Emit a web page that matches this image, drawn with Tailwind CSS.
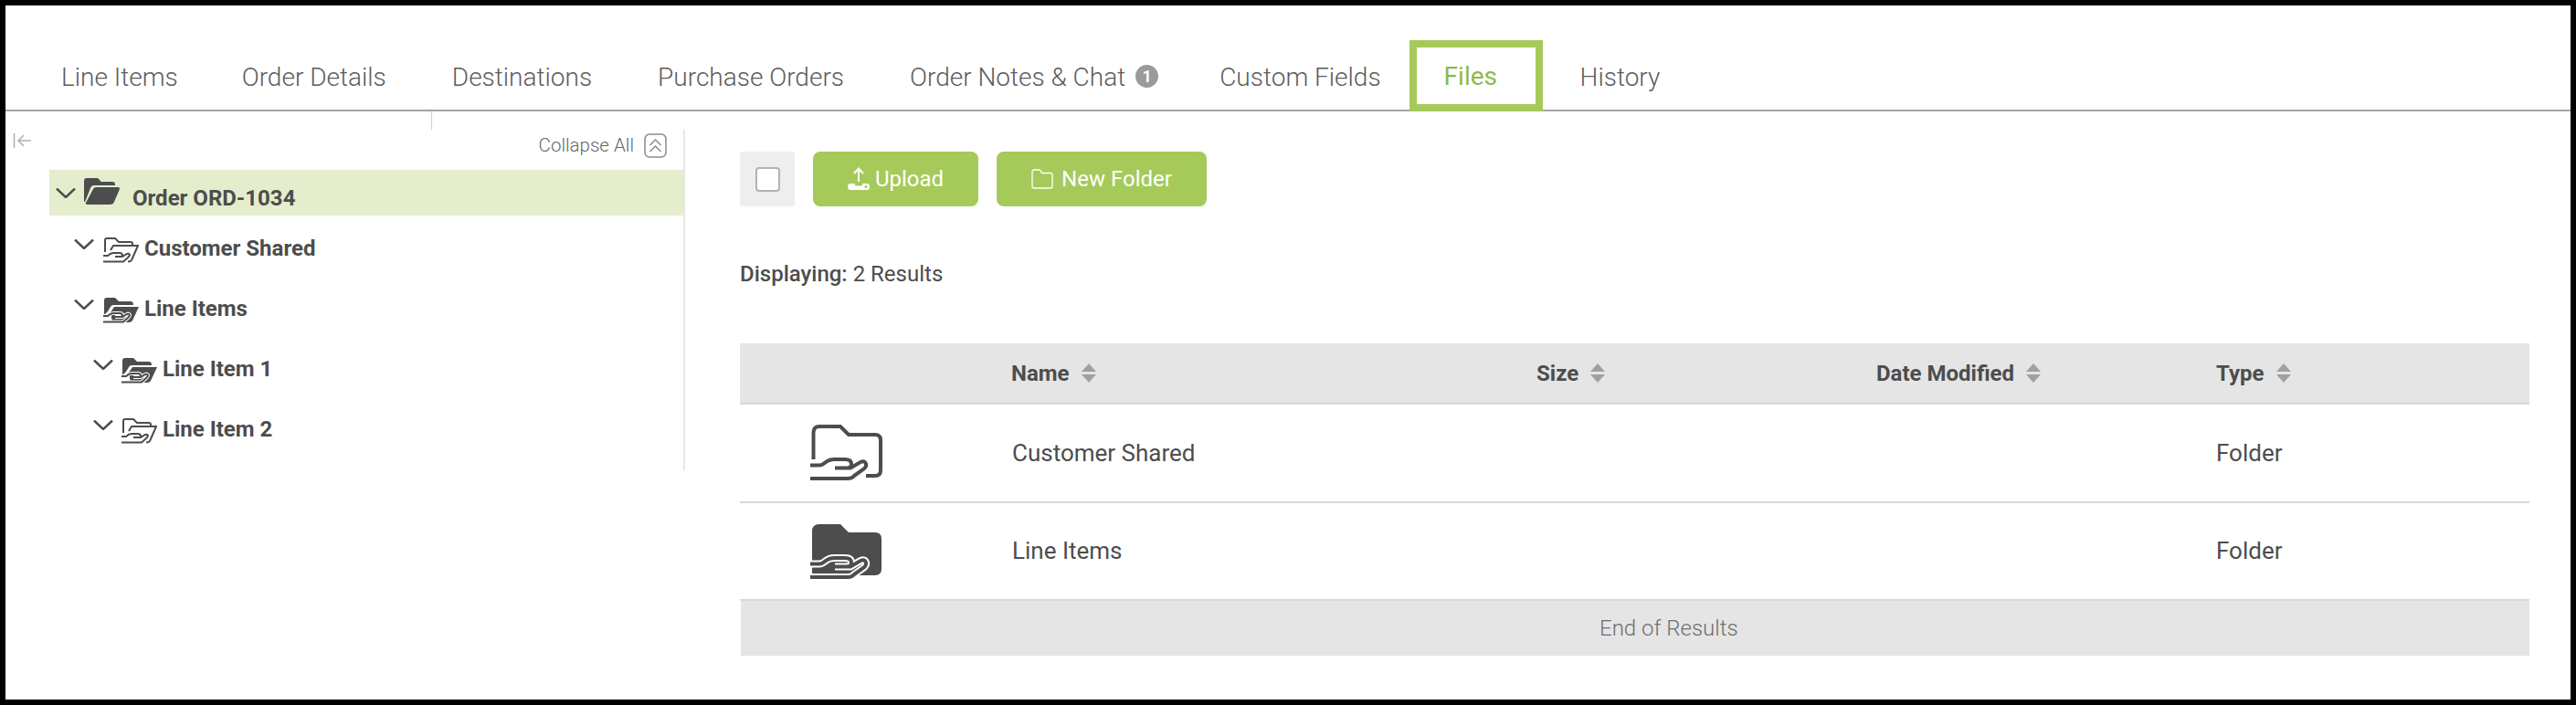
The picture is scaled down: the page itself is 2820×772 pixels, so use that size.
<!DOCTYPE html>
<html><head><meta charset="utf-8"><script src="https://cdn.jsdelivr.net/npm/@tailwindcss/browser@4"></script></head>
<body class="m-0">
<div class="w-[2820px] h-[772px] bg-white border-black border-[6px] flex flex-col overflow-hidden font-['Roboto',sans-serif] text-[#4d4d4d]">
  <nav class="h-[116px] shrink-0 flex items-end border-b-[2px] border-[#a3a3a3] text-[28px] font-light text-[#5c5c5c] pl-[24px]">
    <a class="h-[74px] pl-[37px] pr-[34px] flex items-center pt-[3px] whitespace-nowrap">Line Items</a>
    <a class="h-[74px] px-[36px] flex items-center pt-[3px] whitespace-nowrap">Order Details</a>
    <a class="h-[74px] px-[36px] flex items-center pt-[3px] whitespace-nowrap">Destinations</a>
    <a class="h-[74px] px-[36px] flex items-center pt-[3px] whitespace-nowrap">Purchase Orders</a>
    <a class="h-[74px] pl-[36px] pr-[31px] flex items-center pt-[3px] whitespace-nowrap gap-[11px]">Order Notes &amp; Chat <span class="w-[25px] h-[25px] -mt-[3px] rounded-full bg-[#9a9a9a] text-white text-[18px] font-bold flex items-center justify-center">1</span></a>
    <a class="h-[74px] pl-[36px] pr-[31px] flex items-center pt-[3px] whitespace-nowrap">Custom Fields</a>
    <a class="h-[78px] w-[146px] -mb-[2px] flex items-center pl-[30px] pt-[1px] whitespace-nowrap border-[8px] border-[#a5ca5a] text-[#8fb84a] font-normal">Files</a>
    <a class="h-[74px] pl-[41px] flex items-center pt-[3px] whitespace-nowrap">History</a>
  </nav>
  <div class="flex flex-1 items-start">
    <aside class="w-[743px] h-[393px] shrink-0 flex flex-col relative">
      <div class="h-[64px] shrink-0 flex items-start justify-between relative">
        <svg class="mt-[23px] ml-[8px]" width="22" height="18" viewBox="0 0 22 18" fill="none" stroke="#b0b0b0" stroke-width="1.500"><path d="M1.500 1V17M20 9H6M12 3L6 9L12 15"/></svg>
        <div class="flex items-center gap-[11px] text-[20.5px] font-light text-[#666] mt-[22px] mr-[19px]">
          <span>Collapse All</span>
          <svg width="25" height="27" viewBox="0 0 25 27" fill="none" stroke="#8a8a8a" stroke-width="1.500"><rect x="1" y="1" width="23" height="25" rx="5"/><path d="M6.500 13L12.500 7L18.500 13M6.500 20L12.500 14L18.500 20"/></svg>
        </div>
        <div class="absolute left-[466px] top-0 w-[1px] h-[20px] bg-[#cfcfcf]"></div>
      </div>
      <div class="absolute left-[742px] top-[20px] h-[373px] w-[2px] bg-[#e6e6e6]"></div>
      <div class="h-[50px] ml-[48px] bg-[#e4eecd] flex items-start font-bold text-[24px] text-[#4d4d4d]">
        <svg class="ml-[7px] mt-[20px]" width="22" height="11" viewBox="0 0 22 11" fill="none" stroke="#4d4d4d" stroke-width="2.500"><path d="M1 0.500L11 10L21 0.500"/></svg>
        <svg class="ml-[9px] mt-[9px]" width="39" height="29" viewBox="0 0 39 29" fill="#4d4d4d"><path d="M0 26V3Q0 0 3 0H14Q16 0 17 2L18.500 4H31Q34 4 34 7V8H11Q8 8 7 11L1 26Z"/><path d="M4 29Q1 29 2 27L10 12Q11 10 13 10H37Q39.500 10 39 12L33 26Q32 29 28 29Z"/></svg>
        <span class="ml-[14px] mt-[14px] leading-[34px] whitespace-nowrap">Order ORD-1034</span>
      </div>
      <div class="flex flex-col pt-[3px] font-bold text-[24px] leading-[30px]">
        <div class="h-[66px] flex items-center pl-[75px]">
          <svg class="mb-[10px]" width="22" height="11" viewBox="0 0 22 11" fill="none" stroke="#4d4d4d" stroke-width="2.500"><path d="M1 0.500L11 10L21 0.500"/></svg>
          <svg class="ml-[10px] mt-[4px]" width="39" height="28" viewBox="0 0 39 28" fill="none" stroke="#4d4d4d" stroke-width="2"><path d="M2 16V3Q2 1 4 1H13L17 5H30Q32 5 32 7V9"/><path d="M8 14L11 9H38L31 25Q30 26.500 27 26.500"/><path d="M0 20H5Q8 17 11 17H18Q21 17 21 19.500Q21 21 18 21H13M18 21H21L26 18Q28 17 29 19Q29 20 27 22L22 26.500H0"/></svg>
          <span class="ml-[6px] whitespace-nowrap">Customer Shared</span>
        </div>
        <div class="h-[66px] flex items-center pl-[75px]">
          <svg class="mb-[10px]" width="22" height="11" viewBox="0 0 22 11" fill="none" stroke="#4d4d4d" stroke-width="2.500"><path d="M1 0.500L11 10L21 0.500"/></svg>
          <svg class="ml-[10px] mt-[4px]" width="39" height="28" viewBox="0 0 39 28" fill="none"><path d="M1 19V3Q1 0 4 0H13L17 4H30Q33 4 33 8H11Q9 8 8 10L5 15Z" fill="#4d4d4d"/><path d="M8 16L12 10H39L32 25Q31 27 28 27H10Z" fill="#4d4d4d"/><path d="M0 20H5Q8 17 11 17H18Q21 17 21 19.500Q21 21 18 21H13M18 21H21L26 18Q28 17 29 19Q29 20 27 22L22 26.500H0" stroke="#fff" stroke-width="4"/><path d="M0 20H5Q8 17 11 17H18Q21 17 21 19.500Q21 21 18 21H13M18 21H21L26 18Q28 17 29 19Q29 20 27 22L22 26.500H0" stroke="#4d4d4d" stroke-width="2"/></svg>
          <span class="ml-[6px] whitespace-nowrap">Line Items</span>
        </div>
        <div class="h-[66px] flex items-center pl-[96px]">
          <svg class="mb-[10px]" width="22" height="11" viewBox="0 0 22 11" fill="none" stroke="#4d4d4d" stroke-width="2.500"><path d="M1 0.500L11 10L21 0.500"/></svg>
          <svg class="ml-[9px] mt-[4px]" width="39" height="28" viewBox="0 0 39 28" fill="none"><path d="M1 19V3Q1 0 4 0H13L17 4H30Q33 4 33 8H11Q9 8 8 10L5 15Z" fill="#4d4d4d"/><path d="M8 16L12 10H39L32 25Q31 27 28 27H10Z" fill="#4d4d4d"/><path d="M0 20H5Q8 17 11 17H18Q21 17 21 19.500Q21 21 18 21H13M18 21H21L26 18Q28 17 29 19Q29 20 27 22L22 26.500H0" stroke="#fff" stroke-width="4"/><path d="M0 20H5Q8 17 11 17H18Q21 17 21 19.500Q21 21 18 21H13M18 21H21L26 18Q28 17 29 19Q29 20 27 22L22 26.500H0" stroke="#4d4d4d" stroke-width="2"/></svg>
          <span class="ml-[6px] whitespace-nowrap">Line Item 1</span>
        </div>
        <div class="h-[66px] flex items-center pl-[96px]">
          <svg class="mb-[10px]" width="22" height="11" viewBox="0 0 22 11" fill="none" stroke="#4d4d4d" stroke-width="2.500"><path d="M1 0.500L11 10L21 0.500"/></svg>
          <svg class="ml-[9px] mt-[4px]" width="39" height="28" viewBox="0 0 39 28" fill="none" stroke="#4d4d4d" stroke-width="2"><path d="M2 16V3Q2 1 4 1H13L17 5H30Q32 5 32 7V9"/><path d="M8 14L11 9H38L31 25Q30 26.500 27 26.500"/><path d="M0 20H5Q8 17 11 17H18Q21 17 21 19.500Q21 21 18 21H13M18 21H21L26 18Q28 17 29 19Q29 20 27 22L22 26.500H0"/></svg>
          <span class="ml-[6px] whitespace-nowrap">Line Item 2</span>
        </div>
      </div>
    </aside>
    <main class="flex-1 pl-[61px] pr-[45px] pt-[44px]">
      <div class="flex h-[60px] gap-[20px]">
        <div class="w-[60px] bg-[#eeeeee] rounded-[3px] flex items-center justify-center"><span class="w-[27px] h-[27px] bg-white border-[2px] border-[#b3b3b3] rounded-[4px]"></span></div>
        <button class="w-[181px] bg-[#a5ca5a] rounded-[8px] text-white text-[24px] flex items-center justify-center gap-[6px]">
          <svg width="24" height="26" viewBox="0 0 24 26"><path d="M12 16V2M7 7L12 1.500L17 7" fill="none" stroke="#fff" stroke-width="2"/><path d="M3 18H8V20.500H16V18H21Q24 18 24 21.500Q24 25 21 25H3Q0 25 0 21.500Q0 18 3 18Z" fill="#fff"/><circle cx="20" cy="21.500" r="1.500" fill="#a5ca5a"/></svg>
          <span>Upload</span>
        </button>
        <button class="w-[230px] bg-[#a5ca5a] rounded-[8px] text-white text-[24px] flex items-center justify-center gap-[9px]">
          <svg width="24" height="22" viewBox="0 0 24 22" fill="none" stroke="#fff" stroke-width="1.300"><path d="M1 19V3Q1 1 3 1H9L12 4.500H21Q23 4.500 23 6.500V19Q23 21 21 21H3Q1 21 1 19Z"/></svg>
          <span>New Folder</span>
        </button>
      </div>
      <p class="mt-[59px] h-[30px] leading-[30px] text-[24px]"><span class="font-medium">Displaying:</span> 2 Results</p>
      <div class="mt-[61px] text-[26px]">
        <div class="grid grid-cols-[297px_575px_372px_372px_1fr] h-[67px] bg-[#e5e5e5] border-b-[2px] border-[#d6d6d6] items-center font-bold text-[24px]">
          <span></span>
          <span class="flex items-center gap-[13px]">Name <svg width="16" height="21" viewBox="0 0 16 21" fill="#a0a0a0"><path d="M8 0L16 9H0ZM0 12H16L8 21Z"/></svg></span>
          <span class="flex items-center gap-[13px]">Size <svg width="16" height="21" viewBox="0 0 16 21" fill="#a0a0a0"><path d="M8 0L16 9H0ZM0 12H16L8 21Z"/></svg></span>
          <span class="flex items-center gap-[13px]">Date Modified <svg width="16" height="21" viewBox="0 0 16 21" fill="#a0a0a0"><path d="M8 0L16 9H0ZM0 12H16L8 21Z"/></svg></span>
          <span class="flex items-center gap-[13px]">Type <svg width="16" height="21" viewBox="0 0 16 21" fill="#a0a0a0"><path d="M8 0L16 9H0ZM0 12H16L8 21Z"/></svg></span>
        </div>
        <div class="grid grid-cols-[297px_575px_372px_372px_1fr] h-[108px] border-b-[2px] border-[#d9d9d9] items-center">
          <span class="pl-[77px]"><svg class="block" width="80" height="62" viewBox="0 0 80 62" fill="none" stroke="#4d4d4d" stroke-width="4"><path d="M3.500 38V9Q3.500 2 10 2H33L42 11H71Q77 11 77 17V50Q77 56 71 56H61"/><path d="M0 44.500H10Q13 44.500 17 41Q21 38 26 38H38Q45 38 45 43Q45 47.500 40 47.500H27M40 47.500H44L55 41Q60 39 61 43Q62 46 58 49L48 56Q46 59 41 59H0"/></svg></span>
          <span class="pl-[1px]">Customer Shared</span><span></span><span></span><span>Folder</span>
        </div>
        <div class="grid grid-cols-[297px_575px_372px_372px_1fr] h-[107px] border-b-[2px] border-[#d9d9d9] items-center">
          <span class="pl-[77px]"><svg class="block" width="80" height="62" viewBox="0 0 80 62" fill="none"><path d="M2 44V9Q2 1 10 1H33L42 10H71Q78 10 78 17V50Q78 57 71 57H2Z" fill="#4d4d4d"/><path d="M0 44.500H10Q13 44.500 17 41Q21 38 26 38H38Q45 38 45 43Q45 47.500 40 47.500H27M40 47.500H44L55 41Q60 39 61 43Q62 46 58 49L48 56Q46 59 41 59H0" stroke="#fff" stroke-width="8"/><path d="M0 44.500H10Q13 44.500 17 41Q21 38 26 38H38Q45 38 45 43Q45 47.500 40 47.500H27M40 47.500H44L55 41Q60 39 61 43Q62 46 58 49L48 56Q46 59 41 59H0" stroke="#4d4d4d" stroke-width="4"/></svg></span>
          <span class="pl-[1px]">Line Items</span><span></span><span></span><span>Folder</span>
        </div>
        <div class="h-[60px] ml-[1px] bg-[#e5e5e5] text-[24px] font-light text-[#6f6f6f] flex items-center pl-[940px]">End of Results</div>
      </div>
    </main>
  </div>
</div>
</body></html>
